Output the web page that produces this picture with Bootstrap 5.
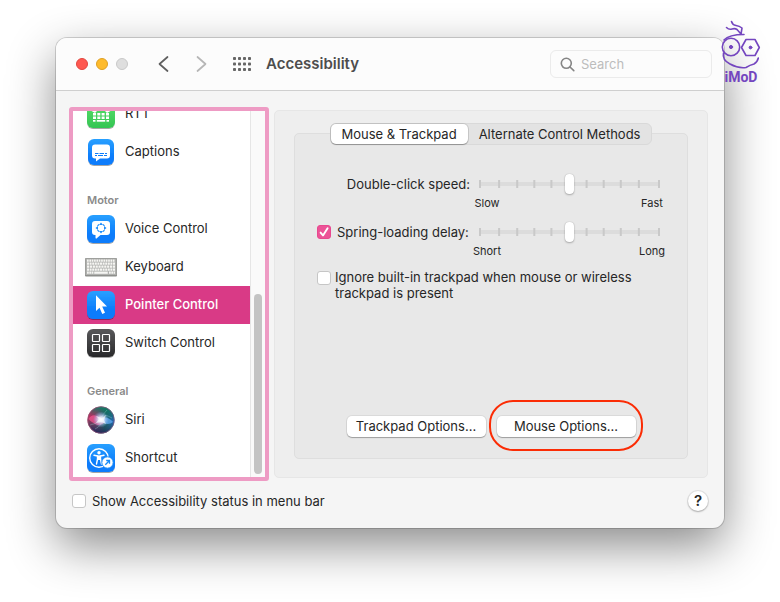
<!DOCTYPE html>
<html lang="en">
<head>
<meta charset="utf-8">
<meta name="viewport" content="width=device-width, initial-scale=1">
<title>Accessibility</title>
<link href="https://cdn.jsdelivr.net/npm/bootstrap@5.3.0/dist/css/bootstrap.min.css" rel="stylesheet">
<style>
  body { font-family: Inter, "Liberation Sans", sans-serif; font-size: 13px; line-height: 16px; color: #262626; background: #fff; padding: 38px 56px 72px; overflow-x: hidden; }
  .pref-window { background: #f5f5f5; border-radius: 11px; box-shadow: 0 0 0 1px rgba(0,0,0,.16), 0 18px 48px rgba(0,0,0,.46); }
  .title-bar { height: 53px; background: #fcfcfc; border-bottom: 1px solid #cfcfcf; border-radius: 11px 11px 0 0; padding: 0 12px 0 20px; }
  .light { width: 12px; height: 12px; border-radius: 50%; border: 1px solid; padding: 0; }
  .light-close { background: #fe5850; border-color: #e2463f; }
  .light-min { background: #febb2c; border-color: #dfa023; }
  .light-off { background: #dedede; border-color: #c9c9c9; }
  .icon-btn { border: 0; padding: 0; background: none; line-height: 0; }
  .nav-tools { margin-left: 28px; gap: 24px; }
  .win-title { font-size: 15px; line-height: 20px; font-weight: 600; color: #4d4d4d; margin: 0 0 0 14px; }
  .search-box { width: 162px; height: 28px; border: 1px solid #ebebeb; border-radius: 6px; padding: 0 8px 0 9px; gap: 6px; }
  .search-box input { font-size: 13px; padding: 0; line-height: 16px; min-height: 0; }
  .search-box input::placeholder { color: #bcbcbc; }
  .main-area { padding: 16px 16px 0 13px; gap: 5px; }
  .sidebar { width: 200px; height: 374px; border: 4px solid #ee9bc4; border-radius: 3px; background: #fff; overflow: hidden; }
  .side-item { height: 38px; flex-shrink: 0; padding: 0 0 0 14px; gap: 10px; color: #262626; text-decoration: none; }
  .side-item span { padding-bottom: 2px; }
  .side-item.active { background: #d93a86; color: #fff; font-weight: 500; }
  .side-item svg { flex-shrink: 0; width: 32px; height: 32px; margin: 0 -2px; overflow: visible; }
  .side-head { height: 39px; flex-shrink: 0; padding: 0 0 3px 14px; margin: 0; font-size: 11px; line-height: 14px; font-weight: 600; color: #8a8a8a; }
  .scroll-lane { width: 15px; background: #fafafa; border-left: 1px solid #e6e6e6; padding: 0 3px 3px; }
  .scroll-thumb { width: 8px; height: 180px; border-radius: 4px; background: #c4c4c4; }
  .pane { background: #eee; border: 1px solid #e6e6e6; border-radius: 5px; margin: 3px 0; padding: 22px 19px 18px; }
  .group-box { background: #e8e8e8; border: 1px solid #dedede; border-radius: 5px; padding-bottom: 21px; }
  .seg { margin-top: -11px; background: #e3e3e3; border: 1px solid #d9d9d9; border-radius: 6px; height: 22px; }
  .seg button { border: 0; background: none; border-radius: 5px; height: 20px; padding: 0 11px; color: #262626; line-height: 18px; white-space: nowrap; }
  .seg button.active { background: #fff; box-shadow: 0 0 0 1px rgba(0,0,0,.1), 0 1px 1px rgba(0,0,0,.25); }
  .settings { padding: 28px 20px 0 22px; }
  .setting-row { height: 48px; gap: 2px; }
  .setting-row .label-cell { height: 22px; width: 153px; white-space: nowrap; }
  .tick-line { gap: 6px; }
  .slider-cell { width: 195px; }
  .slider-stack { display: grid; margin: 0 7px; height: 22px; align-items: center; }
  .slider-stack > * { grid-area: 1 / 1; }
  .slider-stack input { appearance: none; background: none; width: 100%; height: 22px; margin: 0; padding: 0; }
  .slider-stack input::-webkit-slider-runnable-track { background: none; height: 22px; }
  .slider-stack input::-webkit-slider-thumb { appearance: none; width: 9px; height: 20px; margin-top: 1px; border-radius: 4px; background: #fff; box-shadow: 0 0 1px rgba(0,0,0,.3), 0 1px 2px rgba(0,0,0,.25); }
  .ends { font-size: 11px; line-height: 14px; margin-top: 1px; }
  .ends span { width: 30px; text-align: center; }
  .tick { appearance: none; flex-shrink: 0; width: 14px; height: 14px; margin: 0; border-radius: 3px; background: #fff; border: 1px solid #c6c6c6; }
  .tick-top { margin-top: 2px; }
  .tick:checked { border-color: #e8488f; background: #ec5397 url("data:image/svg+xml,%3Csvg xmlns='http://www.w3.org/2000/svg' viewBox='0 0 12 12'%3E%3Cpath d='M2.600 6.600L5 9.400L9.600 2.300' fill='none' stroke='white' stroke-width='1.900' stroke-linecap='round' stroke-linejoin='round'/%3E%3C/svg%3E") center/12px 12px; }
  .push { width: 139px; height: 21px; border: 0; border-radius: 5px; background: #fff; color: #262626; padding: 0; line-height: 19px; box-shadow: 0 0 0 1px rgba(0,0,0,.06), 0 1px 1px rgba(0,0,0,.28); white-space: nowrap; }
  .actions { gap: 11px; }
  .ring { inset: -16px -7px -14px -8px; border: 2px solid #fb2c05; border-radius: 24px; pointer-events: none; }
  .foot { height: 47px; padding: 0 16px 7px; }
  .help { width: 20px; height: 20px; border: 0; border-radius: 50%; background: #fff; font-size: 15px; line-height: 20px; font-weight: 600; color: #262626; padding: 0; box-shadow: 0 0 0 1px rgba(0,0,0,.07), 0 1px 2px rgba(0,0,0,.25); }
  .brand-mark { right: -38px; top: -18px; }
</style>
<script src="https://cdn.jsdelivr.net/npm/bootstrap@5.3.0/dist/js/bootstrap.bundle.min.js"></script>
</head>
<body>
<svg width="0" height="0" class="position-absolute" aria-hidden="true">
  <defs>
    <linearGradient id="blue" x1="0" y1="0" x2="0" y2="1"><stop offset="0" stop-color="#29a0ff"/><stop offset=".7" stop-color="#0a7bfb"/><stop offset="1" stop-color="#0a7bfb"/></linearGradient>
    <linearGradient id="green" x1="0" y1="0" x2="0" y2="1"><stop offset="0" stop-color="#5fe06f"/><stop offset="1" stop-color="#33c552"/></linearGradient>
    <linearGradient id="dark" x1="0" y1="0" x2="0" y2="1"><stop offset="0" stop-color="#58585a"/><stop offset="1" stop-color="#29292b"/></linearGradient>
    <radialGradient id="orb"><stop offset="0" stop-color="#fff"/><stop offset=".35" stop-color="#e3edff" stop-opacity=".85"/><stop offset="1" stop-color="#8fb8ff" stop-opacity="0"/></radialGradient>
    <linearGradient id="orbBase" x1="0" y1=".45" x2="1" y2=".55"><stop offset="0" stop-color="#d8265f"/><stop offset=".35" stop-color="#a03a70"/><stop offset=".65" stop-color="#1f6470"/><stop offset="1" stop-color="#2868c9"/></linearGradient>
    <linearGradient id="orbTop" x1=".6" y1="0" x2=".4" y2="1"><stop offset="0" stop-color="#0d8066"/><stop offset=".45" stop-color="#15634f" stop-opacity=".1"/><stop offset="1" stop-color="#24205a"/></linearGradient>
    <filter id="soft" x="-20%" y="-20%" width="140%" height="150%"><feDropShadow dx="0" dy="1" stdDeviation="0.7" flood-opacity=".35"/></filter>
  </defs>
</svg>
<main class="pref-window position-relative">
  <header class="title-bar d-flex align-items-center">
    <div class="d-flex gap-2">
      <button class="light light-close" aria-label="Close"></button>
      <button class="light light-min" aria-label="Minimize"></button>
      <button class="light light-off" aria-label="Zoom" disabled></button>
    </div>
    <div class="nav-tools d-flex align-items-center">
      <button class="icon-btn" aria-label="Back"><svg width="14" height="18" viewBox="0 0 14 18" fill="none" stroke="#5f5f5f" stroke-width="1.700" stroke-linecap="round" stroke-linejoin="round"><path d="M11.500 2L3.500 9L11.500 16"/></svg></button>
      <button class="icon-btn" aria-label="Forward"><svg width="14" height="18" viewBox="0 0 14 18" fill="none" stroke="#b6b6b6" stroke-width="1.700" stroke-linecap="round" stroke-linejoin="round"><path d="M3.500 2L11.500 9L3.500 16"/></svg></button>
      <button class="icon-btn" aria-label="Show all"><svg width="20" height="16" viewBox="0 0 20 16" fill="#666"><g id="dots"><rect x="1" y="1" width="3" height="3" rx=".8"/><rect x="6" y="1" width="3" height="3" rx=".8"/><rect x="11" y="1" width="3" height="3" rx=".8"/><rect x="16" y="1" width="3" height="3" rx=".8"/></g><use href="#dots" y="5.500"/><use href="#dots" y="11"/></svg></button>
    </div>
    <h1 class="win-title">Accessibility</h1>
    <label class="search-box d-flex align-items-center ms-auto">
      <svg width="15" height="15" viewBox="0 0 15 15" class="flex-shrink-0" fill="none" stroke="#858585" stroke-width="1.600" stroke-linecap="round"><circle cx="6.300" cy="6.300" r="5"/><path d="M10 10L13.800 13.600"/></svg>
      <input type="text" class="form-control border-0 bg-transparent shadow-none" placeholder="Search" aria-label="Search">
    </label>
  </header>

  <div class="main-area d-flex">
    <nav class="sidebar d-flex flex-shrink-0" aria-label="Features">
      <div class="d-flex flex-column justify-content-end flex-grow-1">
        <a href="#" class="side-item d-flex align-items-center">
          <svg viewBox="0 0 32 32"><rect x="2" y="2" width="28" height="28" rx="6" fill="url(#green)" filter="url(#soft)"/><path d="M6.500 13Q7 8 16 8T25.500 13L22 15L19.500 12.500H12.500L10 15Z" fill="#fff"/><g fill="#fff"><rect x="8" y="15" width="3" height="2.500"/><rect x="12.300" y="15" width="3" height="2.500"/><rect x="16.600" y="15" width="3" height="2.500"/><rect x="21" y="15" width="3" height="2.500"/><rect x="8" y="18.500" width="3" height="2.500"/><rect x="12.300" y="18.500" width="3" height="2.500"/><rect x="16.600" y="18.500" width="3" height="2.500"/><rect x="21" y="18.500" width="3" height="2.500"/><rect x="8" y="22" width="2.500" height="1.700"/><rect x="11.800" y="22" width="8.400" height="1.700"/><rect x="21.500" y="22" width="2.500" height="1.700"/></g></svg>
          <span>RTT</span></a>
        <a href="#" class="side-item d-flex align-items-center">
          <svg viewBox="0 0 32 32"><rect x="3" y="3" width="26" height="26" rx="6" fill="url(#blue)" filter="url(#soft)"/><path d="M10 8.500H22Q25 8.500 25 11.500V19.500Q25 22.500 22 22.500H15L11 25.500V22.500H10Q7 22.500 7 19.500V11.500Q7 8.500 10 8.500Z" fill="#fff"/><path d="M10 17.500H13.500M14.500 17.500H19M20 17.500H22M10 19.500H12M13 19.500H18M19 19.500H22" stroke="#0a7bfb" stroke-width="1"/></svg>
          <span>Captions</span></a>
        <h2 class="side-head d-flex align-items-end">Motor</h2>
        <a href="#" class="side-item d-flex align-items-center">
          <svg viewBox="0 0 32 32"><rect x="2" y="2" width="28" height="28" rx="6" fill="url(#blue)" filter="url(#soft)"/><path d="M10 8H22Q25 8 25 11V19Q25 22 22 22H15.500L11.500 25.500Q10.500 26 10.500 24.500V22H10Q7 22 7 19V11Q7 8 10 8Z" fill="#fff"/><path d="M12.500 12.900L14 11.500M18 11.500L19.500 12.900M19.500 17.100L18 18.500M14 18.500L12.500 17.100" fill="none" stroke="#1c8cfb" stroke-width="1.200"/><path d="M16 9.500L18 12H14ZM16 20.500L18 18H14ZM10.500 15L13 13V17ZM21.500 15L19 13V17Z" fill="#1c8cfb"/></svg>
          <span>Voice Control</span></a>
        <a href="#" class="side-item d-flex align-items-center">
          <svg viewBox="0 0 32 32"><rect x="0" y="7" width="32" height="18.500" rx="1" fill="#8e8f8c"/><rect x=".5" y="7.500" width="31" height="16.500" rx=".5" fill="#b0b1ae"/><g stroke="#f6f6f3" stroke-width="2.200"><path d="M2 9.700H30" stroke-dasharray="1.700 .65"/><path d="M2 12.700H30" stroke-dasharray="2 .6"/><path d="M2 15.700H30" stroke-dasharray="2.200 .67"/><path d="M2 18.700H30" stroke-dasharray="2 .6"/><path d="M2 21.700H8.500M24 21.700H30" stroke-dasharray="1.800 .5"/><path d="M9.200 21.700H22.800"/></g></svg>
          <span>Keyboard</span></a>
        <a href="#" class="side-item active d-flex align-items-center" aria-current="page">
          <svg viewBox="0 0 32 32"><rect x="2" y="2" width="28" height="28" rx="6" fill="url(#blue)" filter="url(#soft)"/><path d="M11 6.200L22 17.500H17.200L20 23.700L17.300 25L14.500 18.700L11 21.900Z" fill="#fff"/></svg>
          <span>Pointer Control</span></a>
        <a href="#" class="side-item d-flex align-items-center">
          <svg viewBox="0 0 32 32"><rect x="2" y="2" width="28" height="28" rx="6" fill="url(#dark)" filter="url(#soft)"/><g fill="none" stroke="#fff" stroke-width="1.200"><rect x="7.500" y="7.500" width="7" height="7" rx=".7"/><rect x="17.500" y="7.500" width="7" height="7" rx=".7"/><rect x="7.500" y="17.500" width="7" height="7" rx=".7"/><rect x="17.500" y="17.500" width="7" height="7" rx=".7"/></g></svg>
          <span>Switch Control</span></a>
        <h2 class="side-head d-flex align-items-end">General</h2>
        <a href="#" class="side-item d-flex align-items-center">
          <svg viewBox="0 0 32 32"><circle cx="16" cy="16" r="13.500" fill="url(#orbBase)"/><circle cx="16" cy="16" r="13.300" fill="url(#orbTop)" stroke="#8d5a78" stroke-width=".7"/><path d="M3.500 15Q8 8 15 14L20 18Q15 23 10 20T3.500 15Z" fill="#f0558f" opacity=".75"/><path d="M15 16Q21 10 28 18Q22 23 15 16Z" fill="#63acf5" opacity=".75"/><path d="M5 21Q11 21 15 15T22 6M10 25Q17 22 17 15T27 14" fill="none" stroke="#a8e5e2" stroke-width=".6" opacity=".5"/><circle cx="16" cy="15.500" r="8" fill="url(#orb)"/><path d="M11 12L17 14L21 11L19 16L21 20L16 18L11 19L14 15Z" fill="#fff" opacity=".6"/></svg>
          <span>Siri</span></a>
        <a href="#" class="side-item d-flex align-items-center">
          <svg viewBox="0 0 32 32"><rect x="2" y="2" width="28" height="28" rx="6" fill="url(#blue)" filter="url(#soft)"/><circle cx="14" cy="16" r="9.300" fill="none" stroke="#fff" stroke-width="1.400"/><circle cx="14" cy="10.700" r="1.700" fill="#fff"/><path d="M9 13.300L12.500 14V17L11.500 22M19 13.300L15.500 14V17L16.500 22" fill="none" stroke="#fff" stroke-width="1.400" stroke-linecap="round" stroke-linejoin="round"/><path d="M12 13.400H16V18H12Z" fill="#fff"/><circle cx="22.500" cy="20.500" r="5.700" fill="#fff" stroke="#148af9" stroke-width="1"/><path d="M20.300 22.700L24.300 18.700M21.200 18.500H24.500V21.800" fill="none" stroke="#148af9" stroke-width="1.300"/></svg>
          <span>Shortcut</span></a>
      </div>
      <div class="scroll-lane d-flex align-items-end"><div class="scroll-thumb"></div></div>
    </nav>

    <section class="pane flex-grow-1 d-flex">
      <div class="group-box flex-grow-1 d-flex flex-column align-items-center">
        <div class="seg d-flex" role="tablist">
          <button role="tab" class="active" aria-selected="true">Mouse &amp; Trackpad</button>
          <button role="tab" aria-selected="false">Alternate Control Methods</button>
        </div>
        <div class="settings w-100">
          <div class="setting-row d-flex">
            <label for="dbl" class="label-cell d-flex align-items-center justify-content-end">Double-click speed:</label>
            <div class="slider-cell">
              <div class="slider-stack">
                <svg class="w-100" height="10" viewBox="0 0 180 10" preserveAspectRatio="none"><rect y="3" width="180" height="4" fill="#dcdcdc"/><path d="M1 1V9M20 1V9M38 1V9M55 1V9M72 1V9M107 1V9M124 1V9M141 1V9M159 1V9M179 1V9" stroke="#c9c9c9" stroke-width="2"/></svg>
                <input type="range" id="dbl" min="0" max="10" value="5">
              </div>
              <div class="ends d-flex justify-content-between"><span>Slow</span><span>Fast</span></div>
            </div>
          </div>
          <div class="setting-row d-flex">
            <div class="label-cell tick-line d-flex align-items-center"><input class="tick" type="checkbox" id="spring" checked><label for="spring">Spring-loading delay:</label></div>
            <div class="slider-cell">
              <div class="slider-stack">
                <svg class="w-100" height="10" viewBox="0 0 180 10" preserveAspectRatio="none"><rect y="3" width="180" height="4" fill="#dcdcdc"/><path d="M1 1V9M20 1V9M38 1V9M55 1V9M72 1V9M107 1V9M124 1V9M141 1V9M159 1V9M179 1V9" stroke="#c9c9c9" stroke-width="2"/></svg>
                <input type="range" id="delay" min="0" max="10" value="5" aria-label="Spring-loading delay">
              </div>
              <div class="ends d-flex justify-content-between"><span>Short</span><span>Long</span></div>
            </div>
          </div>
          <div class="d-flex gap-1"><input class="tick tick-top" type="checkbox" id="ignore"><label for="ignore">Ignore built-in trackpad when mouse or wireless<br>trackpad is present</label></div>
        </div>
        <div class="actions d-flex mt-auto">
          <button class="push">Trackpad Options...</button>
          <div class="position-relative d-flex"><button class="push">Mouse Options...</button><span class="ring position-absolute"></span></div>
        </div>
      </div>
    </section>
  </div>

  <footer class="foot d-flex align-items-center justify-content-between">
    <div class="tick-line d-flex align-items-center"><input class="tick" type="checkbox" id="status"><label for="status">Show Accessibility status in menu bar</label></div>
    <button class="help" aria-label="Help">?</button>
  </footer>

  <svg class="brand-mark position-absolute" width="42" height="66" viewBox="720 20 42 66" fill="none" stroke="#7446bf" stroke-width="1.600" stroke-linecap="round" stroke-linejoin="round">
    <path d="M726.500 27.500Q729 30 732 29T737 29.500L741 34M731.500 21.500Q732.500 25 736 25.500T742 28L741 34M724 40Q729 34.500 744 34.500"/>
    <circle cx="731" cy="47" r="8.700"/><path d="M746 39.500H755L759.300 47.500L755 55.500H746L741.500 47.500Z"/>
    <circle cx="731" cy="47" r="1.600" fill="#7446bf" stroke-width="1"/><circle cx="750.500" cy="47.500" r="1.400" fill="#7446bf" stroke-width="1"/>
    <path d="M723.500 53Q722 60 730 64Q738 68.500 746 67.500Q750 65 754 64Q757.500 62 758.300 58"/>
    <text x="724.500" y="82" font-family="Roboto, sans-serif" font-size="14" font-weight="700" fill="#7446bf" stroke="none">iMoD</text>
  </svg>
</main>
</body>
</html>
